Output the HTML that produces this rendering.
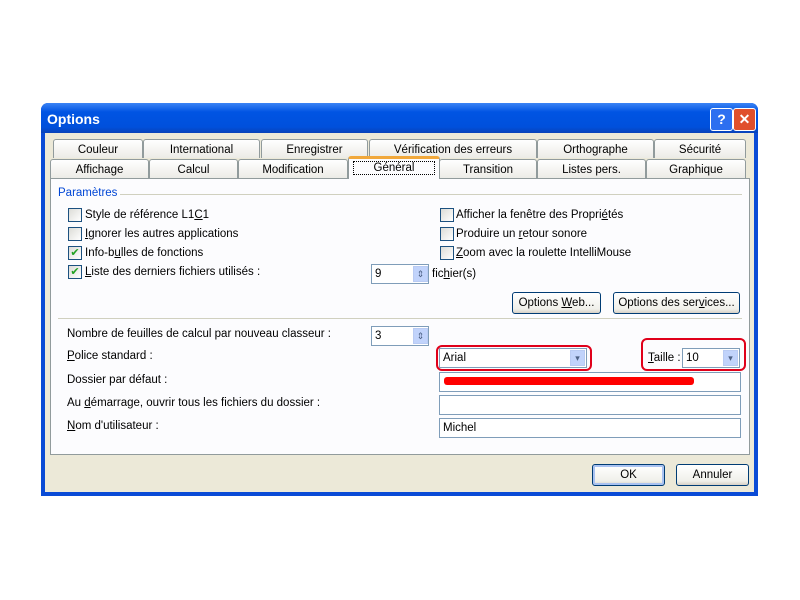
<!DOCTYPE html><html><head><style>
body{margin:0;width:800px;height:600px;background:#fff;position:relative;overflow:hidden;font-family:"Liberation Sans",Arial,sans-serif;font-size:11.5px;color:#000}
.a{position:absolute}
.win{left:41px;top:103px;width:717px;height:393px;background:#0a4bd6;border-radius:7px 7px 0 0}
.title{left:41px;top:103px;width:717px;height:30px;background:linear-gradient(#3b84f5,#0054e3 30%,#0050dc 80%,#0842b8);border-radius:7px 7px 0 0;color:#fff;font-weight:bold;font-size:14px}
.body{left:45px;top:133px;width:709px;height:359px;background:#ece9d8}
.tab{position:absolute;height:19px;background:linear-gradient(#fff,#ecebe6);border:1px solid #919b9c;border-bottom:none;border-radius:3px 3px 0 0;text-align:center;line-height:20px;box-sizing:border-box}
.panel{left:50px;top:178px;width:700px;height:277px;background:#fcfcfe;border:1px solid #919b9c;box-sizing:border-box}
.cb{position:absolute;width:12px;height:12px;border:1px solid #1c5180;background:linear-gradient(135deg,#dcdcd7,#fff)}
.t{position:absolute;white-space:nowrap;margin-top:2px}
.in{position:absolute;background:#fff;border:1px solid #7f9db9;box-sizing:border-box;padding-left:3px;line-height:19px}
.btn{position:absolute;border:1px solid #003c74;border-radius:3px;background:linear-gradient(#fff,#f0f0ea 80%,#d6d0c5);text-align:center;box-sizing:border-box;line-height:21px}
.dd{position:absolute;width:15px;height:16px;background:#c1d3fb;border:1px solid #b9cbf3;box-sizing:border-box;color:#4d6185;font-size:9px;text-align:center;line-height:14px}
.red{position:absolute;border:2px solid #e0001a;border-radius:6px}
u{text-decoration:underline}
</style></head><body>
<div class="a win"></div>
<div class="a title"><span style="position:absolute;left:6px;top:8px">Options</span>
<div style="position:absolute;left:669px;top:5px;width:21px;height:21px;background:#2d6ff0;border:1px solid #fff;border-radius:3px;color:#fff;text-align:center;line-height:20px;font-size:14px">?</div>
<div style="position:absolute;left:692px;top:5px;width:21px;height:21px;background:#e0502c;border:1px solid #fff;border-radius:3px;color:#fff;text-align:center;line-height:20px;font-size:14px">✕</div></div>
<div class="a body"></div>
<div class="tab" style="left:53px;top:139px;width:90px">Couleur</div>
<div class="tab" style="left:143px;top:139px;width:117px">International</div>
<div class="tab" style="left:261px;top:139px;width:107px">Enregistrer</div>
<div class="tab" style="left:369px;top:139px;width:168px">Vérification des erreurs</div>
<div class="tab" style="left:537px;top:139px;width:117px">Orthographe</div>
<div class="tab" style="left:654px;top:139px;width:92px">Sécurité</div>
<div class="tab" style="left:50px;top:159px;width:99px">Affichage</div>
<div class="tab" style="left:149px;top:159px;width:89px">Calcul</div>
<div class="tab" style="left:238px;top:159px;width:110px">Modification</div>
<div class="tab" style="left:439px;top:159px;width:98px">Transition</div>
<div class="tab" style="left:537px;top:159px;width:109px">Listes pers.</div>
<div class="tab" style="left:646px;top:159px;width:100px">Graphique</div>
<div class="a panel"></div>
<div class="tab" style="left:348px;top:156px;width:92px;height:23px;background:#fcfcfe;border-top:3px solid #f1a83b;line-height:18px;z-index:2"><span style="border:1px dotted #000;padding:0 20px">Général</span></div>
<div class="t" style="left:58px;top:185px;color:#0046d5">Paramètres</div>
<div class="a" style="left:120px;top:194px;width:622px;height:1px;background:#d0d0bf"></div>
<div class="cb" style="left:68px;top:208px"></div><div class="t" style="left:85px;top:207px">Style de référence L1<u>C</u>1</div>
<div class="cb" style="left:68px;top:227px"></div><div class="t" style="left:85px;top:226px"><u>I</u>gnorer les autres applications</div>
<div class="cb" style="left:68px;top:246px;color:#21a121;font-size:11px;line-height:12px;text-align:center">✔</div><div class="t" style="left:85px;top:245px">Info-b<u>u</u>lles de fonctions</div>
<div class="cb" style="left:68px;top:265px;color:#21a121;font-size:11px;line-height:12px;text-align:center">✔</div><div class="t" style="left:85px;top:264px"><u>L</u>iste des derniers fichiers utilisés :</div>
<div class="cb" style="left:440px;top:208px"></div><div class="t" style="left:456px;top:207px">Afficher la fenêtre des Propri<u>é</u>tés</div>
<div class="cb" style="left:440px;top:227px"></div><div class="t" style="left:456px;top:226px">Produire un <u>r</u>etour sonore</div>
<div class="cb" style="left:440px;top:246px"></div><div class="t" style="left:456px;top:245px"><u>Z</u>oom avec la roulette IntelliMouse</div>
<div class="in" style="left:371px;top:264px;width:58px;height:20px">9</div><div class="dd" style="left:413px;top:266px">⇕</div>
<div class="t" style="left:432px;top:266px">fic<u>h</u>ier(s)</div>
<div class="btn" style="left:512px;top:292px;width:89px;height:22px">Options <u>W</u>eb...</div>
<div class="btn" style="left:613px;top:292px;width:127px;height:22px">Options des ser<u>v</u>ices...</div>
<div class="a" style="left:58px;top:318px;width:684px;height:1px;background:#d0d0bf"></div>
<div class="t" style="left:67px;top:326px">Nombre de feuilles de calcul par nouveau classeur :</div>
<div class="in" style="left:371px;top:326px;width:58px;height:20px">3</div><div class="dd" style="left:413px;top:328px">⇕</div>
<div class="t" style="left:67px;top:348px"><u>P</u>olice standard :</div>
<div class="in" style="left:439px;top:348px;width:148px;height:20px">Arial</div><div class="dd" style="left:570px;top:350px">▾</div>
<div class="red" style="left:436px;top:345px;width:152px;height:22px"></div>
<div class="t" style="left:648px;top:350px"><u>T</u>aille :</div>
<div class="in" style="left:682px;top:348px;width:58px;height:20px">10</div><div class="dd" style="left:723px;top:350px">▾</div>
<div class="red" style="left:641px;top:338px;width:101px;height:29px"></div>
<div class="t" style="left:67px;top:372px">Dossier par défaut :</div>
<div class="in" style="left:439px;top:372px;width:302px;height:20px"></div>
<div class="a" style="left:444px;top:377px;width:250px;height:8px;background:#f00;border-radius:3px"></div>
<div class="t" style="left:67px;top:395px">Au <u>d</u>émarrage, ouvrir tous les fichiers du dossier :</div>
<div class="in" style="left:439px;top:395px;width:302px;height:20px"></div>
<div class="t" style="left:67px;top:418px"><u>N</u>om d'utilisateur :</div>
<div class="in" style="left:439px;top:418px;width:302px;height:20px">Michel</div>
<div class="btn" style="left:592px;top:464px;width:73px;height:22px;box-shadow:inset 0 0 0 2px #a9c2f1">OK</div>
<div class="btn" style="left:676px;top:464px;width:73px;height:22px">Annuler</div>
</body></html>
